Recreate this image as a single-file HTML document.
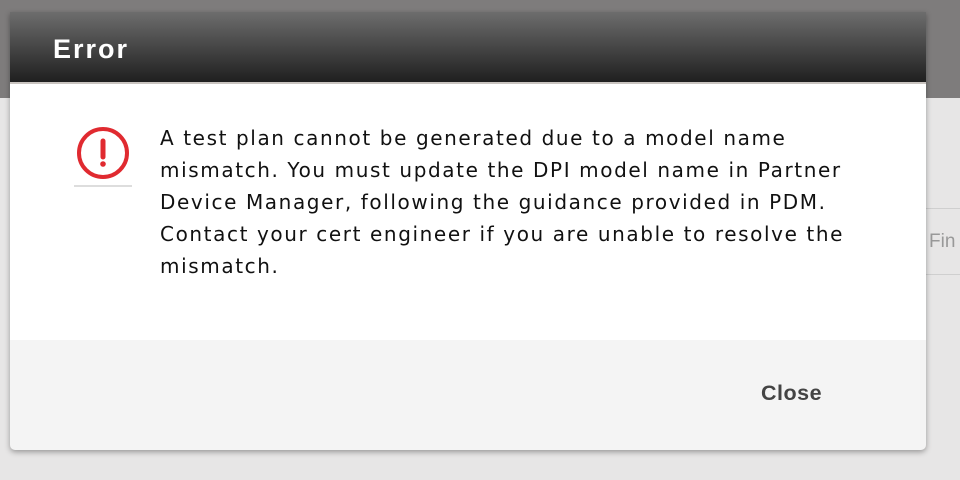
<!DOCTYPE html>
<html><head><meta charset="utf-8"><style>
html,body{margin:0;padding:0;width:960px;height:480px;overflow:hidden;font-family:"Liberation Sans",sans-serif}
.bg{position:absolute;left:0;top:0;width:960px;height:480px;background:#e7e6e6}
.bgtop{position:absolute;left:0;top:0;width:960px;height:98px;background:#7e7c7c}
.l1{position:absolute;left:926px;top:208px;width:34px;height:1px;background:#cfcfcf}
.l2{position:absolute;left:926px;top:274px;width:34px;height:1px;background:#cfcfcf}
.fin{position:absolute;left:929px;top:231px;font-size:19px;color:#999}
.dlg{position:absolute;left:10px;top:12px;width:916px;height:438px;border-radius:0 0 5px 5px;box-shadow:0 2px 6px rgba(0,0,0,.35);overflow:hidden;background:#f4f4f4}
.hd{height:70px;background:linear-gradient(#6d6d6d,#1f1f1f);color:#fff;font-size:27px;letter-spacing:2px;font-weight:bold;line-height:74px;padding-left:43px;border-bottom:2px solid #c9c4c0}
.body{position:absolute;top:72px;left:0;width:916px;height:256px;background:#fff}
.txt{position:absolute;left:150px;top:38px;white-space:nowrap;font-family:"DejaVu Sans",sans-serif;font-size:20px;letter-spacing:1.6px;line-height:32px;color:#111}
.ic{position:absolute;left:64px;top:38px}
.close{position:absolute;left:751px;top:369px;font-size:21.5px;letter-spacing:0.5px;font-weight:bold;color:#444}
</style></head><body>
<div class="bg"></div><div class="bgtop"></div>
<div class="l1"></div><div class="l2"></div><div class="fin">Fin</div>
<div class="dlg">
<div class="hd">Error</div>
<div class="body">
<svg class="ic" width="60" height="70" viewBox="0 0 60 70"><circle cx="29" cy="31" r="24" fill="none" stroke="#e02a30" stroke-width="4"/><path d="M29 19 L29 35" stroke="#e02a30" stroke-width="5" stroke-linecap="round"/><circle cx="29" cy="42" r="2.8" fill="#e02a30"/><rect x="0" y="63" width="58" height="2" fill="#ddd"/></svg>
<div class="txt">A test plan cannot be generated due to a model name<br>mismatch. You must update the DPI model name in Partner<br>Device Manager, following the guidance provided in PDM.<br>Contact your cert engineer if you are unable to resolve the<br>mismatch.</div>
</div>
<div class="close">Close</div>
</div>
</body></html>
